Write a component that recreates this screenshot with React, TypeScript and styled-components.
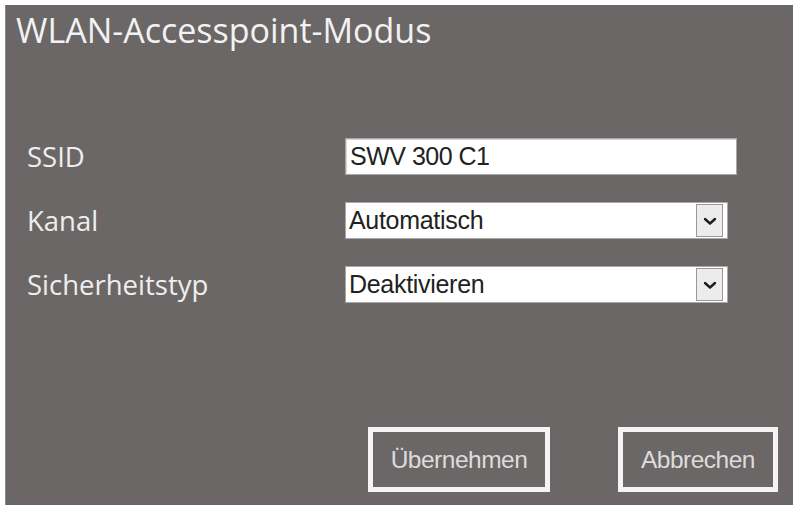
import React from "react";
import styled, { createGlobalStyle } from "styled-components";

const Global = createGlobalStyle`
  html, body { margin: 0; padding: 0; background: #ffffff; }
  body { width: 793px; height: 506px; overflow: hidden; }
`;

const Panel = styled.div`
  box-sizing: border-box;
  margin: 5px 0 0 5px;
  width: 788px;
  height: 500px;
  background: #6b6767;
  border-left: 1px solid #8a8787;
  display: flex;
  flex-direction: column;
  padding: 0 15px 13px 21px;
`;

const Title = styled.h1`
  margin: 0;
  padding: 1px 0 0 0;
  margin-left: -11px;
  font-family: "Open Sans", "Liberation Sans", sans-serif;
  font-weight: 400;
  font-size: 34px;
  line-height: 48px;
  color: #f2f2f2;
  letter-spacing: 0;
`;

const Form = styled.div`
  display: grid;
  grid-template-columns: 318px 1fr;
  row-gap: 27px;
  align-items: center;
  margin-top: 84px;
`;

const Label = styled.label`
  font-family: "Open Sans", "Liberation Sans", sans-serif;
  font-size: 27.5px;
  color: #eeeeee;
  line-height: 37px;
`;

const TextField = styled.div`
  box-sizing: border-box;
  width: 392px;
  height: 37px;
  background: #ffffff;
  border: 1px solid #a9a7a7;
  box-shadow: inset 1px 1px 0 #d8d8d8;
  padding-left: 4px;
  font-family: "Liberation Sans", Arial, sans-serif;
  font-size: 25px;
  line-height: 34px;
  color: #222222;
  letter-spacing: -0.5px;
`;

const Select = styled.div`
  box-sizing: border-box;
  width: 383px;
  height: 37px;
  background: #ffffff;
  border: 1px solid #a9a7a7;
  display: flex;
  align-items: center;
  padding: 0 4px 0 3px;
  font-family: "Liberation Sans", Arial, sans-serif;
  font-size: 25px;
  color: #222222;
`;

const SelectValue = styled.span`
  flex: 1;
  letter-spacing: -0.3px;
`;

const ArrowButton = styled.span`
  box-sizing: border-box;
  width: 27px;
  height: 33px;
  background: #ececec;
  border: 1px solid #9a9898;
  display: flex;
  align-items: center;
  justify-content: center;
`;

const Actions = styled.div`
  margin-top: auto;
  display: flex;
  justify-content: flex-end;
  gap: 68px;
`;

const Button = styled.button<{ $w: number }>`
  box-sizing: border-box;
  width: ${(p) => p.$w}px;
  height: 65px;
  background: #6b6767;
  border: 5px solid #f4f4f4;
  font-family: "Liberation Sans", Arial, sans-serif;
  font-size: 24.5px;
  color: #dcdcdc;
  letter-spacing: -0.5px;
  padding: 0;
`;

const Chevron = () => (
  <svg width="14" height="10" viewBox="0 0 14 10">
    <path d="M2 3 L7 7.5 L12 3" fill="none" stroke="#1e1e1e" strokeWidth="2.4" strokeLinecap="round" strokeLinejoin="round" />
  </svg>
);

const Dropdown = ({ value }: { value: string }) => (
  <Select>
    <SelectValue>{value}</SelectValue>
    <ArrowButton>
      <Chevron />
    </ArrowButton>
  </Select>
);

export default function App() {
  return (
    <>
      <Global />
      <Panel>
        <Title>WLAN-Accesspoint-Modus</Title>
        <Form>
          <Label>SSID</Label>
          <TextField>SWV 300 C1</TextField>
          <Label>Kanal</Label>
          <Dropdown value="Automatisch" />
          <Label>Sicherheitstyp</Label>
          <Dropdown value="Deaktivieren" />
        </Form>
        <Actions>
          <Button $w={182}>Übernehmen</Button>
          <Button $w={160}>Abbrechen</Button>
        </Actions>
      </Panel>
    </>
  );
}
